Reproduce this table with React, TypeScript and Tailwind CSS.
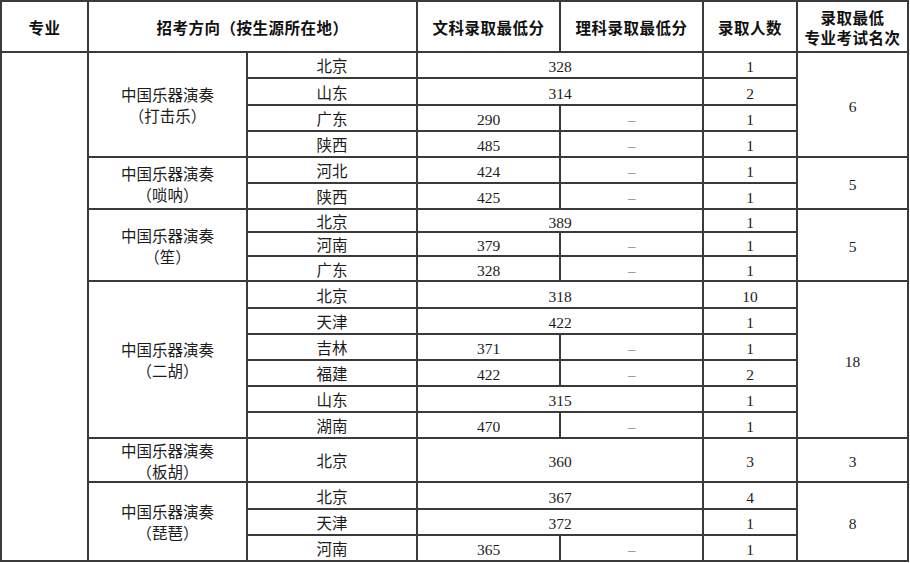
import React from "react";

const body = "font-['Liberation_Serif','Noto_Sans_CJK_SC',serif] text-[15.5px] text-[#1c1c1c]";
const cell = `bg-white flex items-center justify-center text-center leading-[21px] pt-[3px] ${body}`;
const head = "bg-white flex items-center justify-center text-center leading-[20px] font-['Noto_Sans_CJK_SC',sans-serif] font-bold text-[15.5px] tracking-[0.5px] text-[#111]";

function Dash() {
  return <div className={cell}><span className="text-[#555]">–</span></div>;
}

function Group({ name }: { name: string }) {
  return (
    <>
      中国乐器演奏
      <br />
      （{name}）
    </>
  );
}

export default function App() {
  return (
    <div className="w-[910px] h-[563px] bg-white">
      <div className="w-[909px] grid grid-cols-[85px_157px_168px_141px_141px_92px_109px] grid-rows-[49px_24px_25px_24px_24px_24px_24px_21px_22px_23px_25px_24px_24px_24px_24px_24px_42px_25px_24px_24px] gap-[2px] p-[2px] bg-[#3a3a3a]">
        {/* header */}
        <div className={head}>专业</div>
        <div className={`${head} col-span-2`}>招考方向（按生源所在地）</div>
        <div className={head}>文科录取最低分</div>
        <div className={head}>理科录取最低分</div>
        <div className={head}>录取人数</div>
        <div className={head}>
          录取最低
          <br />
          专业考试名次
        </div>

        {/* 打击乐 */}
        <div className={`${cell} row-span-19`}></div>
        <div className={`${cell} row-span-4`}><Group name="打击乐" /></div>
        <div className={cell}>北京</div>
        <div className={`${cell} col-span-2`}>328</div>
        <div className={cell}>1</div>
        <div className={`${cell} row-span-4`}>6</div>

        <div className={cell}>山东</div>
        <div className={`${cell} col-span-2`}>314</div>
        <div className={cell}>2</div>

        <div className={cell}>广东</div>
        <div className={cell}>290</div>
        <Dash />
        <div className={cell}>1</div>

        <div className={cell}>陕西</div>
        <div className={cell}>485</div>
        <Dash />
        <div className={cell}>1</div>

        {/* 唢呐 */}
        <div className={`${cell} row-span-2`}><Group name="唢呐" /></div>
        <div className={cell}>河北</div>
        <div className={cell}>424</div>
        <Dash />
        <div className={cell}>1</div>
        <div className={`${cell} row-span-2`}>5</div>

        <div className={cell}>陕西</div>
        <div className={cell}>425</div>
        <Dash />
        <div className={cell}>1</div>

        {/* 笙 */}
        <div className={`${cell} row-span-3`}><Group name="笙" /></div>
        <div className={cell}>北京</div>
        <div className={`${cell} col-span-2`}>389</div>
        <div className={cell}>1</div>
        <div className={`${cell} row-span-3`}>5</div>

        <div className={cell}>河南</div>
        <div className={cell}>379</div>
        <Dash />
        <div className={cell}>1</div>

        <div className={cell}>广东</div>
        <div className={cell}>328</div>
        <Dash />
        <div className={cell}>1</div>

        {/* 二胡 */}
        <div className={`${cell} row-span-6`}><Group name="二胡" /></div>
        <div className={cell}>北京</div>
        <div className={`${cell} col-span-2`}>318</div>
        <div className={cell}>10</div>
        <div className={`${cell} row-span-6`}>18</div>

        <div className={cell}>天津</div>
        <div className={`${cell} col-span-2`}>422</div>
        <div className={cell}>1</div>

        <div className={cell}>吉林</div>
        <div className={cell}>371</div>
        <Dash />
        <div className={cell}>1</div>

        <div className={cell}>福建</div>
        <div className={cell}>422</div>
        <Dash />
        <div className={cell}>2</div>

        <div className={cell}>山东</div>
        <div className={`${cell} col-span-2`}>315</div>
        <div className={cell}>1</div>

        <div className={cell}>湖南</div>
        <div className={cell}>470</div>
        <Dash />
        <div className={cell}>1</div>

        {/* 板胡 */}
        <div className={cell}><Group name="板胡" /></div>
        <div className={cell}>北京</div>
        <div className={`${cell} col-span-2`}>360</div>
        <div className={cell}>3</div>
        <div className={cell}>3</div>

        {/* 琵琶 */}
        <div className={`${cell} row-span-3`}><Group name="琵琶" /></div>
        <div className={cell}>北京</div>
        <div className={`${cell} col-span-2`}>367</div>
        <div className={cell}>4</div>
        <div className={`${cell} row-span-3`}>8</div>

        <div className={cell}>天津</div>
        <div className={`${cell} col-span-2`}>372</div>
        <div className={cell}>1</div>

        <div className={cell}>河南</div>
        <div className={cell}>365</div>
        <Dash />
        <div className={cell}>1</div>
      </div>
    </div>
  );
}
